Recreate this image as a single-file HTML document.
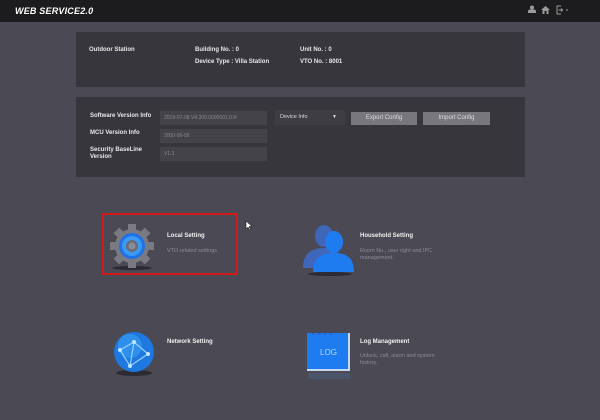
<!DOCTYPE html>
<html><head><style>
*{margin:0;padding:0;box-sizing:border-box}
body{width:600px;height:420px;background:#4b4a54;font-family:"Liberation Sans",sans-serif;position:relative;overflow:hidden}
.a{position:absolute}
.hd{left:0;top:0;width:600px;height:22px;background:#1c1c1e}
.p{background:#37363c}
.l{font-size:6px;font-weight:bold;color:#e8e8e8}
.in{background:#444349;font-size:5px;color:#8a8a8e;padding:4px 4px;}
.bt{background:#78777d;color:#ddd;font-size:6px;text-align:center;line-height:12px}
.t{font-size:6px;font-weight:bold;color:#f0f0f0}
.s{font-size:5.5px;color:#8c8b95;line-height:7px}
</style></head><body>
<div class="a hd"></div>
<div class="a" style="left:15px;top:6px;font-size:9px;font-weight:bold;font-style:italic;color:#fff;letter-spacing:.2px">WEB SERVICE2.0</div>
<svg class="a" style="left:527px;top:4px" width="50" height="12" viewBox="0 0 50 12">
<circle cx="5" cy="3.5" r="2" fill="#9a9a9a"/><path d="M1 9h8v-1.5a2 2 0 0 0-2-2h-4a2 2 0 0 0-2 2z" fill="#9a9a9a"/>
<path d="M14 6l4.5-4 4.5 4h-1.5v4h-2v-3h-2v3h-2v-4z" fill="#9a9a9a"/>
<path d="M34 2h-4v8h4" fill="none" stroke="#9a9a9a" stroke-width="1"/><path d="M31.5 6h4M34 4.5l1.5 1.5-1.5 1.5" fill="none" stroke="#9a9a9a" stroke-width="1"/>
<rect x="39" y="5.5" width="2" height="1" fill="#9a9a9a"/>
</svg>
<div class="a p" style="left:76px;top:32px;width:449px;height:55px"></div>
<div class="a l" style="left:89px;top:47px">Outdoor Station</div>
<div class="a l" style="left:195px;top:47px">Building No. : 0</div>
<div class="a l" style="left:195px;top:59px">Device Type : Villa Station</div>
<div class="a l" style="left:300px;top:47px">Unit No. : 0</div>
<div class="a l" style="left:300px;top:59px">VTO No. : 8001</div>
<div class="a p" style="left:76px;top:97px;width:449px;height:80px"></div>
<div class="a l" style="left:90px;top:113px">Software Version Info</div>
<div class="a l" style="left:90px;top:130px">MCU Version Info</div>
<div class="a l" style="left:90px;top:147px;line-height:7px">Security BaseLine<br>Version</div>
<div class="a in" style="left:160px;top:111px;width:107px;height:14px">2019-07-08.V4.300.0000001.0.R</div>
<div class="a in" style="left:160px;top:129px;width:107px;height:14px">2000-00-00</div>
<div class="a in" style="left:160px;top:147px;width:107px;height:14px">V1.3</div>
<div class="a" style="left:275px;top:110px;width:70px;height:15px;background:#3e3d43;font-size:5.5px;color:#ddd;padding:4px 5px">Device Info<span style="position:absolute;right:8px;top:4px;font-size:5px">▼</span></div>
<div class="a bt" style="left:351px;top:112px;width:66px;height:13px">Export Config</div>
<div class="a bt" style="left:423px;top:112px;width:67px;height:13px">Import Config</div>

<div class="a" style="left:102px;top:213px;width:136px;height:62px;border:2px solid #d01c1c"></div>
<svg class="a" style="left:108px;top:222px" width="50" height="50" viewBox="0 0 50 50">
<ellipse cx="24" cy="46" rx="20" ry="2" fill="#2c2b33"/>
<g fill="#7a7a82">
<circle cx="24" cy="24" r="17"/>
<g id="tt"><rect x="20" y="2" width="8" height="8"/><rect x="20" y="38" width="8" height="8"/><rect x="2" y="20" width="8" height="8"/><rect x="38" y="20" width="8" height="8"/></g>
<use href="#tt" transform="rotate(45 24 24)"/>
</g>
<circle cx="24" cy="24" r="13" fill="#1e72e6"/><circle cx="24" cy="24" r="10" fill="#3b9af6"/>
<circle cx="24" cy="24" r="6" fill="#6a6c78"/><circle cx="24" cy="24" r="3.5" fill="#8a8c96"/>
</svg>
<div class="a t" style="left:167px;top:233px">Local Setting</div>
<div class="a s" style="left:167px;top:248px">VTO related settings</div>

<svg class="a" style="left:300px;top:220px" width="56" height="60" viewBox="0 0 56 60">
<ellipse cx="24" cy="16" rx="9" ry="11" fill="#3f66b8"/><path d="M3 48c0-14 8-20 21-20s19 6 19 20z" fill="#3f66b8"/>
<ellipse cx="34" cy="22" rx="9" ry="11" fill="#1f7cf0"/><path d="M13 52c0-14 8-19 21-19s20 5 20 19z" fill="#1f7cf0"/>
<ellipse cx="30" cy="54" rx="22" ry="2" fill="#2c2b33"/>
</svg>
<div class="a t" style="left:360px;top:233px">Household Setting</div>
<div class="a s" style="left:360px;top:248px">Room No., user right and IPC<br>management.</div>

<svg class="a" style="left:110px;top:328px" width="52" height="56" viewBox="0 0 52 56">
<ellipse cx="24" cy="45" rx="18" ry="3" fill="#2c2b33"/>
<circle cx="24" cy="24" r="20" fill="#1e78e0"/><circle cx="20" cy="18" r="12" fill="#3aa0f4" opacity=".6"/>
<path d="M10 22l14-8 14 12M24 14l-4 24M10 22l10 16 18-12" stroke="#8fd0ff" stroke-width="1.2" fill="none"/>
<circle cx="24" cy="14" r="2" fill="#bfe6ff"/><circle cx="38" cy="26" r="2" fill="#bfe6ff"/><circle cx="20" cy="38" r="2" fill="#bfe6ff"/><circle cx="10" cy="22" r="2" fill="#bfe6ff"/>
</svg>
<div class="a t" style="left:167px;top:339px">Network Setting</div>

<div class="a" style="left:307px;top:333px;width:43px;height:38px;background:#1e7cf0;border-right:2px solid #c8d8f0;border-bottom:2px solid #c8d8f0"></div>
<div class="a" style="left:307px;top:348px;width:43px;text-align:center;font-size:8px;color:#b8d8ff">LOG</div>
<div class="a" style="left:312px;top:331px;font-size:5px;color:#2a4a90;letter-spacing:3px">oooo</div>
<div class="a" style="left:308px;top:373px;width:42px;height:6px;background:#4a6080;opacity:.5"></div>
<div class="a t" style="left:360px;top:339px">Log Management</div>
<div class="a s" style="left:360px;top:353px">Unlock, call, alarm and system<br>history.</div>
<svg class="a" style="left:245px;top:220px" width="8" height="11" viewBox="0 0 8 11"><path d="M1 1v8l2-2 1.5 3 1-.5-1.5-3h3z" fill="#fff" stroke="#000" stroke-width=".5"/></svg>
</body></html>
